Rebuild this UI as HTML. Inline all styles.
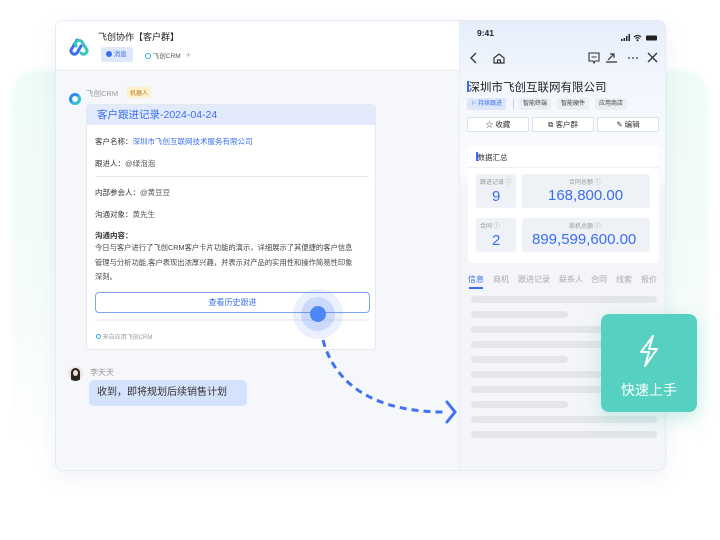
<!DOCTYPE html>
<html><head><meta charset="utf-8"><style>
*{margin:0;padding:0;box-sizing:border-box}
body{width:720px;height:540px;background:#fff;position:relative;overflow:hidden;font-family:"Liberation Sans","Noto Sans CJK SC",sans-serif;color:#333}
.a{position:absolute}
.glow{left:12px;top:70px;width:696px;height:380px;border-radius:24px;background:linear-gradient(180deg,#eefbf6,#f5fcf9 60%,#fff);filter:blur(2px)}
.main{left:55px;top:20px;width:611px;height:451px;background:#f6f7fa;border:1px solid #e6ebf3;border-radius:8px;box-shadow:0 6px 20px rgba(120,150,200,.12);overflow:hidden}
.hdr{left:0;top:0;width:403px;height:50px;background:#fff;border-bottom:1px solid #eceef2}
.card{left:30px;top:83px;width:290px;height:246px;background:#fff;border:1px solid #e5e8ee;border-radius:4px;overflow:hidden}
.f{font-size:7.5px;color:#333;left:8px}
.right{left:403px;top:0;width:208px;height:451px;background:linear-gradient(180deg,#e6eefc 0,#f2f6fd 60px,#fbfcff 150px,#f4f5f8 170px,#f4f5f8);border-left:1px solid #e9ecf2}
.btn{height:15px;border:1px solid #dde1e8;border-radius:2px;background:#fff;font-size:7.5px;text-align:center;line-height:13px;color:#333;top:96px}
.tag{top:77px;height:12px;font-size:6px;line-height:12px;padding:0 4px;background:#eceef2;border-radius:2px;color:#444}
.stat{background:#eef1f6;border-radius:3px}
.sk{height:7px;border-radius:4px;background:#e3e5e9;left:11px}
.tab{top:253px;font-size:8px;color:#aaa}
</style></head><body>
<div class="a glow"></div>
<div class="a main">
 <div class="a hdr">
  <svg class="a" style="left:12px;top:16px" width="22" height="20" viewBox="0 0 22 20"><path d="M9 3 L3 13 a3.5 3.5 0 0 0 6 3 L13 9" fill="none" stroke="#3a6df0" stroke-width="3" stroke-linecap="round"/><path d="M8 9 a3.5 3.5 0 0 1 6 -4 L19 13 a3.5 3.5 0 0 1 -6 3" fill="none" stroke="#36c6c0" stroke-width="3" stroke-linecap="round"/></svg>
  <div class="a" style="left:42px;top:9px;font-size:9px;color:#222">飞创协作【客户群】</div>
  <div class="a" style="left:45px;top:26px;width:32px;height:15px;background:#dfe7fb;border-radius:3px;font-size:6.5px;color:#3a6df0;line-height:15px;padding-left:5px"><span style="display:inline-block;width:6px;height:6px;background:#3a6df0;border-radius:50%;vertical-align:-1px"></span> 消息</div>
  <div class="a" style="left:89px;top:29px;font-size:6.5px;color:#555"><span style="display:inline-block;width:6px;height:6px;border:1.5px solid #2fa6e8;border-radius:50%;vertical-align:-1px"></span> 飞创CRM &nbsp;&nbsp;<span style="color:#aaa;font-size:9px">+</span></div>
 </div>
 <div class="a" style="left:13px;top:72px;width:12px;height:12px;border:3px solid #1e9bf0;border-color:#2d8cf0 #32c0d0 #32c0d0 #2d8cf0;border-radius:50%"></div>
 <div class="a" style="left:30px;top:67px;font-size:7.5px;color:#999">飞创CRM</div>
 <div class="a" style="left:71px;top:66px;font-size:6px;color:#b08020;background:#fdf0cc;padding:1px 3px;border-radius:2px">机器人</div>
 <div class="a card">
  <div class="a" style="left:0;top:0;width:290px;height:20px;background:#e2eafc;font-size:10.5px;color:#3a6df0;line-height:20px;padding-left:10px">客户跟进记录-2024-04-24</div>
  <div class="a f" style="top:31px">客户名称：<span style="color:#3a6df0">深圳市飞创互联网技术服务有限公司</span></div>
  <div class="a f" style="top:53px">跟进人：<span style="color:#555">@绿泡泡</span></div>
  <div class="a" style="left:8px;top:71px;width:274px;height:1px;background:#e6e8ec"></div>
  <div class="a f" style="top:82px">内部参会人：<span style="color:#555">@黄豆豆</span></div>
  <div class="a f" style="top:104px">沟通对象：<span style="color:#555">黄先生</span></div>
  <div class="a f" style="top:125px;font-weight:bold">沟通内容：</div>
  <div class="a f" style="top:136px;white-space:nowrap;font-size:7.3px;line-height:14.5px;color:#444">今日与客户进行了飞创CRM客户卡片功能的演示，详细展示了其便捷的客户信息<br>管理与分析功能,客户表现出浓厚兴趣，并表示对产品的实用性和操作简易性印象<br>深刻。</div>
  <div class="a" style="left:8px;top:187px;width:275px;height:21px;border:1px solid #7fa3f5;border-radius:4px;text-align:center;line-height:19px;font-size:8px;color:#3a6df0">查看历史跟进</div>
  <div class="a" style="left:8px;top:214px;width:275px;height:2px;background:#f1f2f5"></div>
  <div class="a" style="left:9px;top:227px;font-size:6px;color:#999"><span style="display:inline-block;width:5px;height:5px;border:1.5px solid #2fa6e8;border-radius:50%"></span> 来自应用飞创CRM</div>
 </div>
 <div class="a" style="left:237px;top:268px;width:50px;height:50px;border-radius:50%;background:rgba(80,130,245,.12)"></div>
 <div class="a" style="left:245px;top:276px;width:34px;height:34px;border-radius:50%;background:rgba(80,130,245,.2)"></div>
 <div class="a" style="left:254px;top:285px;width:16px;height:16px;border-radius:50%;background:#4f86f7"></div>
 <div class="a" style="left:12px;top:345px;width:15px;height:15px;border-radius:50%;background:#ece8e4;overflow:hidden"><div style="margin:2px auto 0;width:9px;height:13px;background:#2a2420;border-radius:5px 5px 0 0;position:relative"><div style="position:absolute;left:2px;top:2px;width:5px;height:6px;background:#f3dccd;border-radius:50%"></div></div></div>
 <div class="a" style="left:34px;top:346px;font-size:8px;color:#999">李天天</div>
 <div class="a" style="left:33px;top:359px;width:158px;height:26px;background:#d5e2fb;border-radius:5px;font-size:10px;line-height:26px;padding-left:8px;color:#333">收到，即将规划后续销售计划</div>
 <div class="a right">
  <div class="a" style="left:17px;top:7px;font-size:8.5px;color:#222;font-weight:bold">9:41</div>
  <div class="a" style="left:161px;top:8px;width:38px;height:7px">
   <svg width="38" height="8"><rect x="0" y="5" width="1.5" height="2" fill="#222"/><rect x="2.5" y="4" width="1.5" height="3" fill="#222"/><rect x="5" y="2" width="1.5" height="5" fill="#222"/><rect x="7.5" y="0" width="1.5" height="7" fill="#222"/><path d="M13 3 a5 5 0 0 1 7 0 M14.5 4.5 a3 3 0 0 1 4 0" stroke="#222" stroke-width="1.2" fill="none"/><circle cx="16.5" cy="6.3" r="1" fill="#222"/><rect x="25" y="1.5" width="11" height="5" rx="1" fill="#222"/></svg>
  </div>
  <svg class="a" style="left:8px;top:30px" width="190" height="14" viewBox="0 0 190 14"><path d="M8 2 L3 7 L8 12" stroke="#333" stroke-width="1.3" fill="none"/><path d="M26 7 L31 3 L36 7 V12 H26 Z M29.5 12 V9 H32.5 V12" stroke="#333" stroke-width="1.2" fill="none"/><path d="M121 2 H131 V10 H127 L126 12 L125 10 H121 Z M123.5 6 H128.5" stroke="#333" stroke-width="1.1" fill="none"/><path d="M138 11 H149 M140 9 L145 4 M142 3 H146 V7" stroke="#333" stroke-width="1.2" fill="none"/><circle cx="161" cy="7" r="0.9" fill="#333"/><circle cx="165" cy="7" r="0.9" fill="#333"/><circle cx="169" cy="7" r="0.9" fill="#333"/><path d="M180 2 L189 11 M189 2 L180 11" stroke="#333" stroke-width="1.3"/></svg>
  <div class="a" style="left:7px;top:58px;font-size:11.5px;color:#222"><span style="display:inline-block;width:1.5px;height:11px;background:#3a6df0;vertical-align:-1px"></span>深圳市飞创互联网有限公司</div>
  <div class="a tag" style="left:7px;background:#dde7fb;color:#3a6df0">⚐ 持续跟进</div>
  <div class="a" style="left:53px;top:78px;width:1px;height:10px;background:#ccd"></div>
  <div class="a tag" style="left:59px">智能终端</div>
  <div class="a tag" style="left:97px">智能硬件</div>
  <div class="a tag" style="left:135px">应用商店</div>
  <div class="a btn" style="left:7px;width:62px">☆ 收藏</div>
  <div class="a btn" style="left:72px;width:62px">⧉ 客户群</div>
  <div class="a btn" style="left:137px;width:62px">✎ 编辑</div>
  <div class="a" style="left:8px;top:125px;width:191px;height:117px;background:#fff;border-radius:4px">
   <div class="a" style="left:8px;top:6px;font-size:7.5px;color:#333"><span style="display:inline-block;width:1.5px;height:9px;background:#3a6df0;vertical-align:-1px"></span>数据汇总</div>
   <div class="a" style="left:0;top:21px;width:191px;height:1px;background:#f0f1f4"></div>
   <div class="a stat" style="left:8px;top:28px;width:40px;height:34px"><div class="a" style="left:4px;top:3px;font-size:6px;color:#999">跟进记录 ⓘ</div><div class="a" style="left:16px;top:14px;font-size:15px;color:#3a6df0">9</div></div>
   <div class="a stat" style="left:54px;top:28px;width:128px;height:34px"><div class="a" style="left:47px;top:3px;font-size:6px;color:#999">合同总额 ⓘ</div><div class="a" style="left:26px;top:13px;font-size:15px;color:#3a6df0">168,800.00</div></div>
   <div class="a stat" style="left:8px;top:72px;width:40px;height:34px"><div class="a" style="left:4px;top:3px;font-size:6px;color:#999">合同 ⓘ</div><div class="a" style="left:16px;top:14px;font-size:15px;color:#3a6df0">2</div></div>
   <div class="a stat" style="left:54px;top:72px;width:128px;height:34px"><div class="a" style="left:47px;top:3px;font-size:6px;color:#999">商机总额 ⓘ</div><div class="a" style="left:10px;top:13px;font-size:15px;color:#3a6df0">899,599,600.00</div></div>
  </div>
  <div class="a tab" style="left:8px;color:#3a6df0">信息</div>
  <div class="a" style="left:9px;top:266px;width:14px;height:1.5px;background:#3a6df0"></div>
  <div class="a tab" style="left:33px">商机</div>
  <div class="a tab" style="left:58px">跟进记录</div>
  <div class="a tab" style="left:99px">联系人</div>
  <div class="a tab" style="left:131px">合同</div>
  <div class="a tab" style="left:156px">线索</div>
  <div class="a tab" style="left:181px">报价</div>
  <div class="a sk" style="top:275px;width:186px"></div>
  <div class="a sk" style="top:290px;width:97px"></div>
  <div class="a sk" style="top:305px;width:186px"></div>
  <div class="a sk" style="top:320px;width:186px"></div>
  <div class="a sk" style="top:335px;width:97px"></div>
  <div class="a sk" style="top:350px;width:186px"></div>
  <div class="a sk" style="top:365px;width:186px"></div>
  <div class="a sk" style="top:380px;width:97px"></div>
  <div class="a sk" style="top:395px;width:186px"></div>
  <div class="a sk" style="top:410px;width:186px"></div>
 </div>
</div>
<svg class="a" style="left:0;top:0" width="720" height="540"><path d="M323 340 C335 385 375 412 445 412" stroke="#3f73f2" stroke-width="3" stroke-dasharray="7 5" fill="none"/><path d="M447 402 L455 412 L447 422" stroke="#3f73f2" stroke-width="3" fill="none" stroke-linecap="round"/></svg>
<div class="a" style="left:601px;top:314px;width:96px;height:98px;background:#56d0c0;border-radius:8px;box-shadow:0 6px 18px rgba(80,200,180,.3)">
 <svg class="a" style="left:36px;top:20px" width="24" height="34" viewBox="0 0 24 34"><path d="M16 2 L4 18 H12 L8 32 L20 15 H12 Z" stroke="#fff" stroke-width="2" fill="none" stroke-linejoin="round"/></svg>
 <div class="a" style="left:0;top:66px;width:96px;text-align:center;font-size:14px;color:#fff">快速上手</div>
</div>
</body></html>
